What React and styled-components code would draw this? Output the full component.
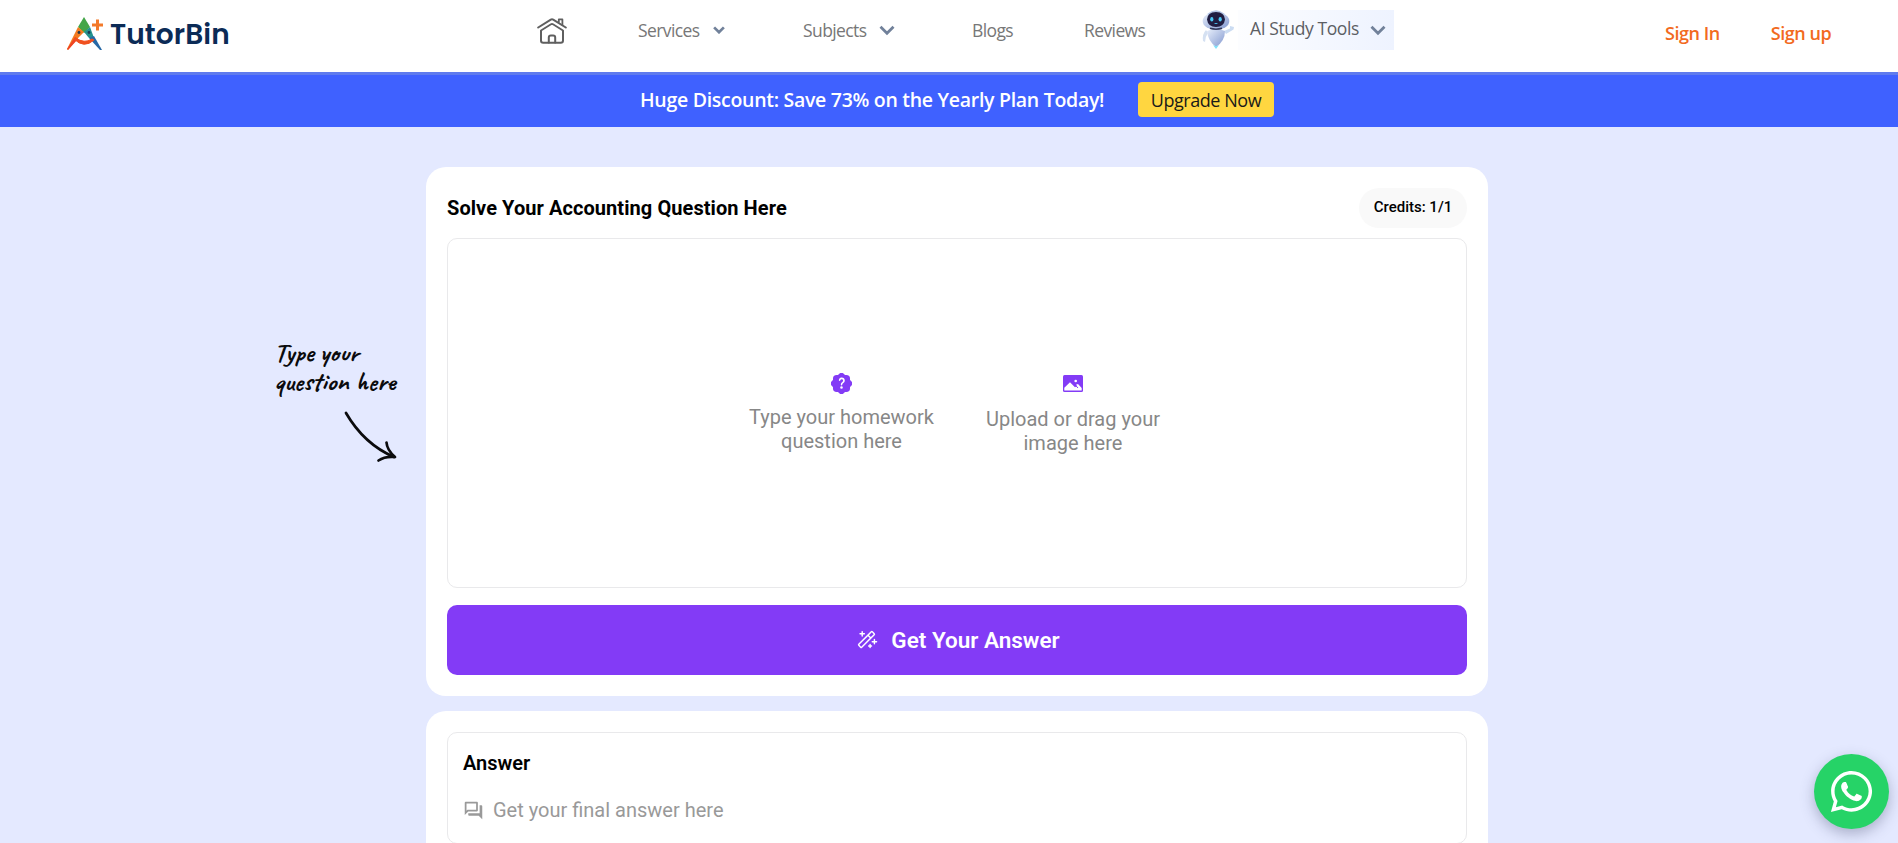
import React from 'react';
import styled, { createGlobalStyle } from 'styled-components'
import { BsPatchQuestionFill } from 'react-icons/bs'
import { PiMagicWand } from 'react-icons/pi'
import { MdOutlineQuestionAnswer } from 'react-icons/md'
import { FaWhatsapp } from 'react-icons/fa'

function Chevron({ size = 16, stroke = 2.8, color = '#71819a' }) {
    return (
        <svg width={size} height={size * 0.6875} viewBox="0 0 16 11" fill="none">
            <path d="M1.5 1.8 L8 8.3 L14.5 1.8" stroke={color} strokeWidth={stroke} />
        </svg>
    )
}

function LogoMark() {
    return (
        <svg width="37" height="34" viewBox="0 0 37 34">
            <path d="M17 0 L23 10 L17 16 L11 10 Z" fill="#43a548" />
            <path d="M11 10 L17 15 L12 20 L1 33 L0 32 Z" fill="#f47b20" />
            <path d="M8 20 L11 22 L1 33 L0 32 Z" fill="#ef4423" />
            <path d="M23 10 L17 15 L22 21 L27 21 Z" fill="#23928d" />
            <path d="M22 21 L27 19 L35 33 L33 33 Z" fill="#2768a5" />
            <path d="M7 22 Q17 32 27 23 L25 22 Q17 27 9 21 Z" fill="#f0501f" stroke="#f0501f" strokeWidth="1" />
            <circle cx="12" cy="15.5" r="1.4" fill="#24394d" />
            <circle cx="22" cy="15.5" r="1.4" fill="#173d56" />
            <path d="M30.5 2.5 V13.5 M25 8 H36" stroke="#f37a2b" strokeWidth="3" />
        </svg>
    )
}

function HomeIcon() {
    return (
        <svg width="30" height="28" viewBox="0 0 30 28" fill="none" stroke="#5f5f5f" strokeWidth="2" strokeLinecap="round" strokeLinejoin="round">
            <path d="M1.2 10.5 L13.8 2.7 Q15 2 16.2 2.7 L28.8 10.5" />
            <path d="M4 14 V23.5 Q4 25.7 6.2 25.7 H23.8 Q26 25.7 26 23.5 V14" />
            <path d="M4 13.5 L14 7.3 Q15 6.7 16 7.3 L26 13.5" strokeWidth="1.8" />
            <path d="M11.8 25.5 V20.5 Q11.8 18.4 13.8 18.4 H16.2 Q18.2 18.4 18.2 20.5 V25.5" />
            <path d="M21.8 5 V2.4 H25.4 V8" strokeWidth="1.8" />
        </svg>
    )
}

function Robot() {
    return (
        <svg width="33" height="40" viewBox="0 0 33 40">
            <defs>
                <linearGradient id="shell" x1="0" y1="0" x2="1" y2="1">
                    <stop offset="0" stopColor="#e8effb" />
                    <stop offset="1" stopColor="#8298cf" />
                </linearGradient>
            </defs>
            <path d="M22 21 L28 18.5 L28 16 L32 17 L31.5 19.5 L24 24 Z" fill="#cbdcf2" />
            <path d="M4 20 Q0 24 1 31 L3 32 Q3 27 6 23 Z" fill="#d5e1f2" />
            <path d="M5 21 Q14 17 23 21 Q23 31 14 37 Q6 31 5 21 Z" fill="url(#shell)" />
            <path d="M11 35 Q14 37 17 35 L14 39 Z" fill="#80e2fb" />
            <ellipse cx="14" cy="11" rx="13.3" ry="9" fill="url(#shell)" />
            <path d="M6 4.5 Q14 -2 22 4.5" stroke="#b6c7e6" strokeWidth="2" fill="none" />
            <path d="M5 9.5 Q5.5 2 14 2 Q22.5 2 23 9.5 Q22 17 14 17 Q6 17 5 9.5 Z" fill="#211e42" />
            <path d="M8 18.3 Q14 20 20 18.3" stroke="#333a5c" strokeWidth="1.5" fill="none" />
            <ellipse cx="9.8" cy="9.3" rx="1.6" ry="2.2" fill="#4bc9f5" />
            <ellipse cx="18.2" cy="9.3" rx="1.6" ry="2.2" fill="#4bc9f5" />
            <path d="M12 13 Q14 15 16 13 Z" fill="#4bc9f5" />
        </svg>
    )
}

function PictureIcon() {
    return (
        <svg width="20" height="17" viewBox="0 0 20 17">
            <rect width="20" height="17" rx="1.5" fill="#833bf6" />
            <path d="M1.3 15.5 V12.8 L7 7.2 L12 12.3 L14 11 L13 9.7 L15 9 L18.7 13 V15.5 Z" fill="#fff" />
            <path d="M11.8 9.5 L15 13" stroke="#833bf6" strokeWidth="1" />
            <circle cx="12.7" cy="6" r="1.3" fill="#fff" />
        </svg>
    )
}

function App() {
    return (
        <Page>
            <GlobalStyle />
            <Header>
                <Logo>
                    <LogoMark />
                    <span>TutorBin</span>
                </Logo>
                <Nav>
                    <HomeLink><HomeIcon /></HomeLink>
                    <NavItem $width={165}>
                        <NavText $width={75}>Services</NavText>
                        <Chevron size={12} stroke={3.6} />
                    </NavItem>
                    <NavItem $width={169}>
                        <NavText $width={76}>Subjects</NavText>
                        <Chevron />
                    </NavItem>
                    <NavItem $width={112}>Blogs</NavItem>
                    <NavItem $width={118}>Reviews</NavItem>
                    <Robot />
                    <StudyTools>
                        <span>AI Study Tools</span>
                        <Chevron />
                    </StudyTools>
                </Nav>
                <Auth>
                    <AuthLink>Sign In</AuthLink>
                    <AuthLink>Sign up</AuthLink>
                </Auth>
            </Header>
            <Banner>
                <Offer>Huge Discount: Save 73% on the Yearly Plan Today!</Offer>
                <Upgrade>Upgrade Now</Upgrade>
            </Banner>
            <Content>
                <Hint>
                    <HintText>Type your<br />question here</HintText>
                    <svg width="54" height="52" viewBox="0 0 54 52" fill="none" stroke="#0b0b0d" strokeWidth="2.7" strokeLinecap="round" strokeLinejoin="round">
                        <path d="M2 2 Q20 33 50 46" />
                        <path d="M42.5 31.5 Q43 39 51 46 Q41 45 34.5 49.5" />
                    </svg>
                </Hint>
                <Cards>
                    <Card>
                        <CardHead>
                            <Title>Solve Your Accounting Question Here</Title>
                            <Credits>Credits: 1/1</Credits>
                        </CardHead>
                        <InputBox>
                            <Choice>
                                <BsPatchQuestionFill size={21} />
                                <p>Type your homework<br />question here</p>
                            </Choice>
                            <Choice $low>
                                <PictureIcon />
                                <p>Upload or drag your<br />image here</p>
                            </Choice>
                        </InputBox>
                        <AnswerButton>
                            <PiMagicWand size={23} />
                            <span>Get Your Answer</span>
                        </AnswerButton>
                    </Card>
                    <Card>
                        <AnswerBox>
                            <AnswerTitle>Answer</AnswerTitle>
                            <Placeholder>
                                <MdOutlineQuestionAnswer size={21} />
                                <span>Get your final answer here</span>
                            </Placeholder>
                        </AnswerBox>
                    </Card>
                </Cards>
            </Content>
            <WhatsApp><FaWhatsapp size={47} /></WhatsApp>
        </Page>
    )
}

export default App

const GlobalStyle = createGlobalStyle`
  * {
    box-sizing: border-box;
  }
  body {
    margin: 0;
    overflow: hidden;
    font-family: Roboto, "Liberation Sans", sans-serif;
  }
  svg {
    display: block;
    flex-shrink: 0;
  }
  button {
    border: none;
    cursor: pointer;
  }
`;

const Page = styled.div`
  height: 100vh;
  overflow: hidden;
  background: #e4e9ff;
`;

const Header = styled.header`
  display: flex;
  height: 72px;
  padding-left: 67px;
  background: #fff;
  font-family: "Open Sans", "Noto Sans", sans-serif;
  white-space: nowrap;
`;

const Logo = styled.div`
  display: flex;
  align-items: flex-start;
  gap: 6px;
  width: 470px;
  padding-top: 17px;
  span {
    font-family: Poppins, Inter, sans-serif;
    font-size: 28px;
    font-weight: 600;
    line-height: 36px;
    color: #0b2b56;
    letter-spacing: 0.1px;
  }
`;

const Nav = styled.nav`
  display: flex;
  align-items: flex-start;
  width: 1128px;
  padding-top: 10px;
`;

const HomeLink = styled.div`
  width: 101px;
  padding-top: 7px;
`;

const NavItem = styled.div`
  display: flex;
  align-items: center;
  width: ${props => props.$width}px;
  height: 40px;
  font-size: 17.5px;
  font-weight: 400;
  letter-spacing: -0.6px;
  color: #777;
`;

const NavText = styled.span`
  width: ${props => props.$width}px;
`;

const StudyTools = styled.div`
  display: flex;
  align-items: center;
  justify-content: space-between;
  width: 156px;
  height: 40px;
  margin-left: 3px;
  padding: 0 8px 0 12px;
  background: linear-gradient(90deg, #fcfdff, #eef3ff);
  font-size: 17.5px;
  font-weight: 400;
  letter-spacing: -0.4px;
  color: #5c5e64;
  span {
    margin-top: -4px;
  }
`;

const Auth = styled.div`
  display: flex;
  gap: 51px;
  padding-top: 20px;
`;

const AuthLink = styled.a`
  font-size: 18px;
  font-weight: 600;
  line-height: 26px;
  letter-spacing: -0.45px;
  color: #f26a21;
`;

const Banner = styled.div`
  display: flex;
  align-items: center;
  height: 55px;
  padding: 0 0 3px 640px;
  border-top: 3px solid #5f7bee;
  background: #3f61ff;
  font-family: "Open Sans", "Noto Sans", sans-serif;
  white-space: nowrap;
`;

const Offer = styled.div`
  width: 498px;
  font-size: 19.5px;
  font-weight: 600;
  letter-spacing: -0.29px;
  color: #fff;
`;

const Upgrade = styled.button`
  width: 136px;
  height: 35px;
  padding: 0;
  border-radius: 4px;
  background: #ffd640;
  font-family: inherit;
  font-size: 18px;
  font-weight: 500;
  letter-spacing: -0.45px;
  color: #191919;
`;

const Content = styled.main`
  display: flex;
  padding: 40px 0 0 274px;
`;

const Hint = styled.div`
  display: flex;
  flex-direction: column;
  width: 152px;
  padding-top: 171px;
  svg {
    margin: 15px 0 0 70px;
  }
`;

const HintText = styled.div`
  font-family: Caveat, "Comic Neue", Lato, sans-serif;
  font-size: 27px;
  font-weight: 600;
  line-height: 29px;
  white-space: nowrap;
  color: #0b0b0d;
`;

const Cards = styled.div`
  display: flex;
  flex-direction: column;
  gap: 15px;
  width: 1062px;
`;

const Card = styled.section`
  padding: 21px;
  border-radius: 20px;
  background: #fff;
`;

const CardHead = styled.div`
  display: flex;
  align-items: center;
  justify-content: space-between;
  height: 40px;
  margin-bottom: 10px;
`;

const Title = styled.h1`
  margin: 0;
  font-size: 20px;
  font-weight: 700;
  letter-spacing: 0.07px;
  color: #000;
`;

const Credits = styled.div`
  width: 108px;
  height: 40px;
  border-radius: 20px;
  background: #f9f9f9;
  font-size: 15px;
  font-weight: 500;
  line-height: 38px;
  text-align: center;
  color: #000;
`;

const InputBox = styled.div`
  display: flex;
  justify-content: center;
  gap: 52px;
  height: 350px;
  padding: 134px 5px 0 0;
  border: 1px solid #e9e9eb;
  border-radius: 10px;
`;

const Choice = styled.div`
  display: flex;
  flex-direction: column;
  align-items: center;
  padding-top: ${props => props.$low ? 2 : 0}px;
  color: #833bf6;
  p {
    margin: ${props => props.$low ? 15 : 11}px 0 0;
    font-size: 20px;
    line-height: 24px;
    text-align: center;
    color: #878787;
  }
`;

const AnswerButton = styled.button`
  display: flex;
  align-items: center;
  justify-content: center;
  gap: 13px;
  width: 100%;
  height: 70px;
  margin-top: 17px;
  padding: 0 0 1px 1px;
  border-radius: 10px;
  background: #833bf6;
  font-family: inherit;
  font-size: 22.5px;
  font-weight: 600;
  color: #fff;
`;

const AnswerBox = styled.div`
  height: 112px;
  padding: 18px 15px;
  border: 1px solid #e9e9eb;
  border-radius: 10px;
`;

const AnswerTitle = styled.h2`
  margin: 0;
  font-size: 20px;
  font-weight: 600;
  line-height: 24px;
  color: #000;
`;

const Placeholder = styled.div`
  display: flex;
  align-items: center;
  gap: 9px;
  margin-top: 23px;
  font-size: 20px;
  line-height: 24px;
  color: #999;
`;

const WhatsApp = styled.button`
  position: fixed;
  left: 1814px;
  top: 754px;
  display: flex;
  align-items: center;
  justify-content: center;
  width: 75px;
  height: 75px;
  padding: 0;
  border-radius: 50%;
  background: #26d367;
  box-shadow: 0 5px 14px rgba(60, 65, 100, 0.35);
  color: #fff;
`;
